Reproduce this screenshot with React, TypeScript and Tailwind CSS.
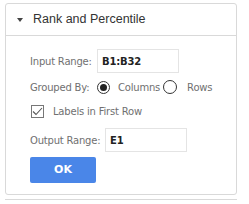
export default function App() {
  return (
    <div className="w-[249px] h-[204px] bg-white pt-[3px] pl-[5px] font-['DejaVu_Sans',sans-serif]">
      <div className="w-[232px] rounded-[3px] border border-[#d9d9d9] bg-white">
        {/* Header */}
        <div className="h-[32px] flex items-center border-b border-[#d9d9d9] pl-[11px]">
          <svg width="6" height="4" viewBox="0 0 6 4" className="mr-[10px]">
            <path d="M0 0 L6 0 L3 4 Z" fill="#444" />
          </svg>
          <span className="font-['Liberation_Sans',Arial,sans-serif] text-[12.5px] text-[#333]">
            Rank and Percentile
          </span>
        </div>

        {/* Body */}
        <div className="pl-[24px] pt-[13px] pb-[11px] text-[10px] tracking-[-0.2px] text-[#707070]">
          <div className="flex items-center h-[24px]">
            <span className="w-[67px]">Input Range:</span>
            <div className="w-[82px] h-[24px] border border-[#e4e4e4] flex items-center pl-[4px] font-bold text-[#222]">
              B1:B32
            </div>
          </div>

          <div className="flex items-center h-[14px] mt-[7px]">
            <span className="w-[67px]">Grouped By:</span>
            <span className="w-[13px] h-[13px] rounded-full border-[1.5px] border-[#333] flex items-center justify-center">
              <span className="w-[7px] h-[7px] rounded-full bg-[#222]" />
            </span>
            <span className="ml-[8px]">Columns</span>
            <span className="ml-[3px] w-[14px] h-[14px] rounded-full border-[1.5px] border-[#333]" />
            <span className="ml-[10px]">Rows</span>
          </div>

          <div className="flex items-center h-[14px] mt-[10px]">
            <span className="ml-[1px] w-[13px] h-[13px] border border-[#777] flex items-center justify-center">
              <svg width="11" height="9" viewBox="0 0 11 9">
                <path d="M1 4.5 L4 7.5 L10 1" fill="none" stroke="#555" strokeWidth="1.1" />
              </svg>
            </span>
            <span className="ml-[9px]">Labels in First Row</span>
          </div>

          <div className="flex items-center h-[24px] mt-[10px]">
            <span className="w-[75px]">Output Range:</span>
            <div className="w-[82px] h-[24px] border border-[#e4e4e4] flex items-center pl-[4px] font-bold text-[#222]">
              E1
            </div>
          </div>

          <button className="mt-[5px] w-[66px] h-[26px] rounded-[2px] bg-[#4a86e8] text-white font-bold text-[11px] tracking-normal">
            OK
          </button>
        </div>
      </div>
      <div className="w-[232px] mt-[4px] border-t border-[#d9d9d9]" />
    </div>
  );
}
